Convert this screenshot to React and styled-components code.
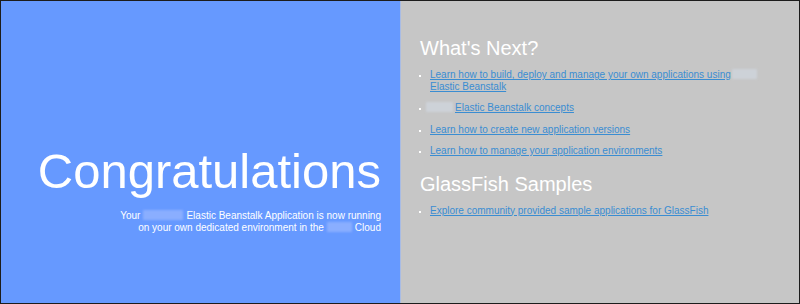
import React from "react";
import styled, { createGlobalStyle } from "styled-components";

const Global = createGlobalStyle`
  html, body { margin: 0; padding: 0; }
  body { font-family: "Liberation Sans", Arial, sans-serif; font-size: 10px; color: #ffffff; }
  * { box-sizing: border-box; }
`;

const Frame = styled.div`
  width: 800px;
  height: 304px;
  border: 1px solid #1c1c1c;
  display: grid;
  grid-template-columns: 399px 1fr;
  overflow: hidden;
`;

const TextColumn = styled.section`
  background: #6699ff;
  padding: 110px 19px 20px 20px;
  text-align: right;
`;

const LinksColumn = styled.section`
  background: #c6c6c6;
  border-left: 1px solid #a9bce4;
  padding: 20px 20px 20px 19px;
`;

const Title = styled.h1`
  font-size: 49px;
  font-weight: normal;
  margin: 32px 0 0;
  line-height: 1.15;
`;

const Lead = styled.p`
  margin: 11px 0 0 auto;
  width: 270px;
  font-size: 10px;
  line-height: 11.5px;
`;

const Redacted = styled.span`
  display: inline-block;
  width: ${(p) => p.$w}px;
  height: 10px;
  vertical-align: -1px;
  margin: 0 ${(p) => p.$mr ?? 3}px 0 ${(p) => p.$ml ?? 3}px;
  background: ${(p) => (p.$onBlue ? "#8aaeff" : "#cdd2d8")};
  filter: blur(0.8px);
`;

const Heading = styled.h2`
  font-size: 20px;
  font-weight: normal;
  margin: 16px 0 0;
  line-height: 22px;
`;

const List = styled.ul`
  margin: 10px 0;
  padding-left: 10px;
  list-style: square;
`;

const Item = styled.li`
  margin-bottom: 10px;
  line-height: 11.5px;
  &::marker { color: #ffffff; font-size: 8px; }
`;

const Link = styled.a`
  color: #3a8dd2;
  text-decoration: underline;
  cursor: pointer;
`;

export default function App() {
  return (
    <>
      <Global />
      <Frame>
        <TextColumn>
          <Title>Congratulations</Title>
          <Lead>
            Your<Redacted $w={40} $onBlue />Elastic Beanstalk Application is now running
            <br />
            on your own dedicated environment in the<Redacted $w={25} $onBlue />Cloud
          </Lead>
        </TextColumn>
        <LinksColumn>
          <Heading>What's Next?</Heading>
          <List>
            <Item>
              <Link>
                Learn how to build, deploy and manage your own applications using
                <Redacted $w={25} $ml={1} $mr={0} />
                <br />
                Elastic Beanstalk
              </Link>
            </Item>
            <Item>
              <Redacted $w={27} $ml={-4} $mr={2} />
              <Link>Elastic Beanstalk concepts</Link>
            </Item>
            <Item>
              <Link>Learn how to create new application versions</Link>
            </Item>
            <Item>
              <Link>Learn how to manage your application environments</Link>
            </Item>
          </List>
          <Heading>GlassFish Samples</Heading>
          <List>
            <Item>
              <Link>Explore community provided sample applications for GlassFish</Link>
            </Item>
          </List>
        </LinksColumn>
      </Frame>
    </>
  );
}
